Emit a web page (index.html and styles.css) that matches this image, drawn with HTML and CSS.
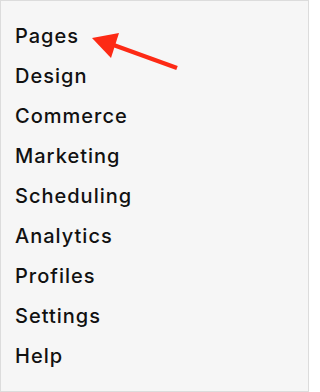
FILE: index.html
```html
<!DOCTYPE html>
<html>
<head>
<meta charset="utf-8">
<link rel="stylesheet" href="styles.css">
</head>
<body>
<div class="panel">
  <ul class="menu">
    <li>Pages</li>
    <li>Design</li>
    <li>Commerce</li>
    <li>Marketing</li>
    <li>Scheduling</li>
    <li>Analytics</li>
    <li>Profiles</li>
    <li>Settings</li>
    <li>Help</li>
  </ul>
  <svg class="arrow" width="309" height="100" viewBox="0 0 309 100">
    <line x1="177" y1="68" x2="108" y2="43" stroke="#fd2a15" stroke-width="4.5" stroke-linecap="butt"/>
    <polygon points="92,38 119,33 111,58" fill="#fd2a15"/>
  </svg>
</div>
</body>
</html>
```
FILE: styles.css
```css
html, body {
  margin: 0;
  padding: 0;
}
body {
  width: 309px;
  height: 392px;
  overflow: hidden;
  font-family: Inter, "Noto Sans", sans-serif;
}
.panel {
  position: relative;
  box-sizing: border-box;
  width: 309px;
  height: 392px;
  background: #f6f6f6;
  border: 1px solid #dcdcdc;
}
.menu {
  list-style: none;
  margin: 0;
  padding: 15px 0 0 14px;
}
.menu li {
  font-size: 20px;
  font-weight: 500;
  line-height: 40px;
  color: #111;
  letter-spacing: 1px;
}
.arrow {
  position: absolute;
  left: -1px;
  top: -1px;
}
```
